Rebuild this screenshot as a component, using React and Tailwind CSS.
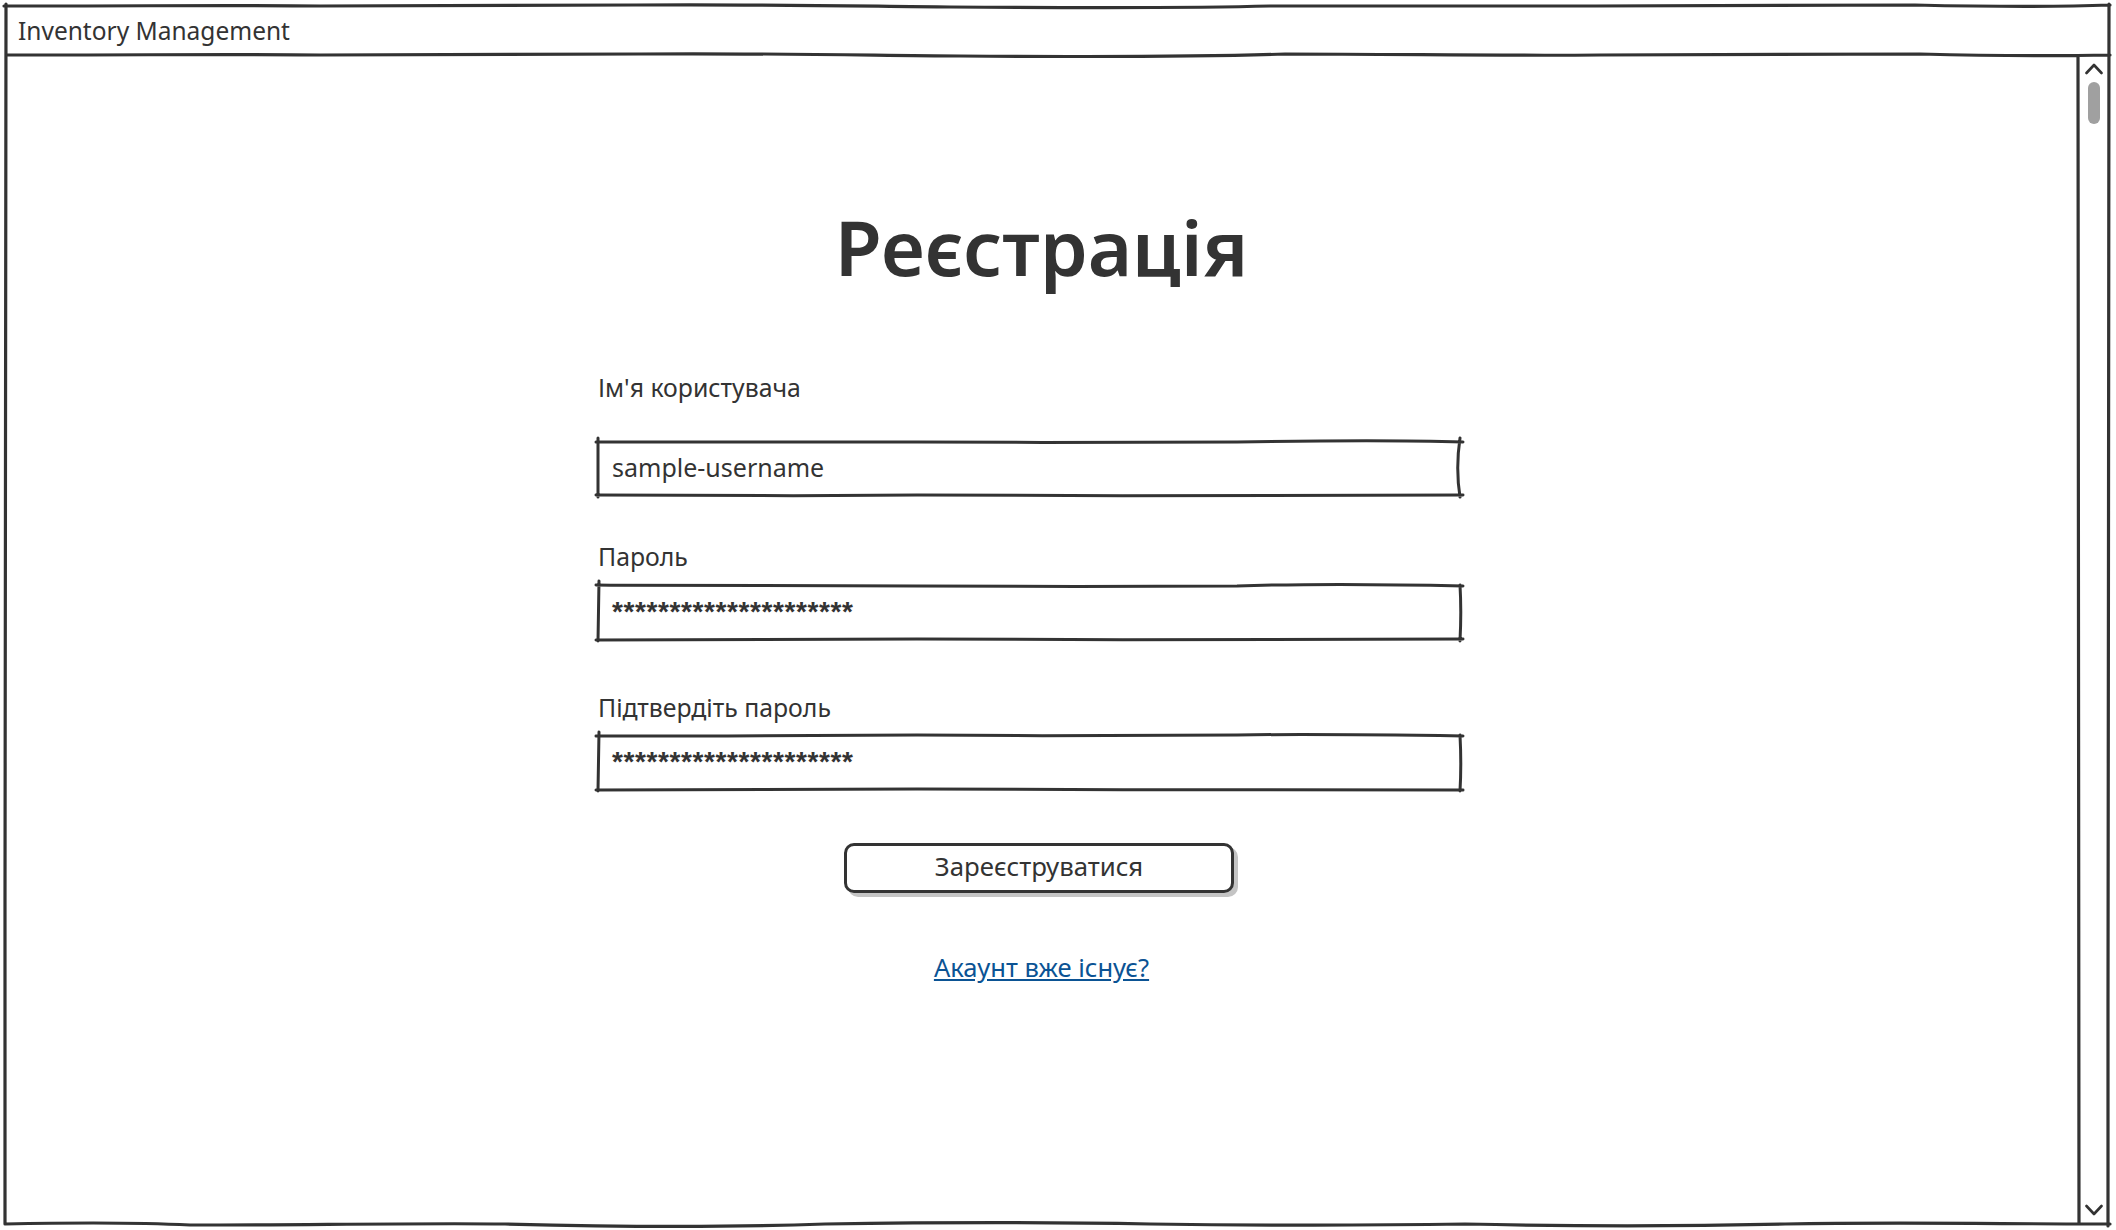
import React from "react";

const ink = "#333333";

function Sketch({ d, w = 3 }) {
  return (
    <svg className="absolute inset-0 h-full w-full overflow-visible pointer-events-none" fill="none">
      <path d={d} stroke={ink} strokeWidth={w} strokeLinecap="round" strokeLinejoin="round" />
    </svg>
  );
}

function Field({ label, value, stars, top, outline }) {
  return (
    <div>
      <div className={`text-[24.8px] leading-[32px] text-[#333] pl-[1px] ${top}`}>{label}</div>
      <div className="relative h-[56px] w-[864px] pl-[15px] flex items-start">
        <Sketch d={outline} />
        {stars ? (
          <span className="text-[28px] leading-[32px] mt-[12px] tracking-[0.6px] font-['Liberation_Sans',sans-serif] font-bold text-[#333]">{value}</span>
        ) : (
          <span className="text-[25px] leading-[36px] mt-[9px] text-[#333]">{value}</span>
        )}
      </div>
    </div>
  );
}

const box1 = "M-1 2 C100 2 240 2 320 2 C430 3 520 2 640 2 C700 1 800 0 866 2 M1 -2 L1 57 M-1 55 C150 56 200 56 320 55 C500 56 700 56 866 55 M863 -2 C860 18 860 38 863 57";
const box2 = "M-1 1 C100 2 200 2 320 2 C430 3 530 2 640 2 C700 0 780 0 866 2 M2 -3 L1 57 M-1 56 C150 56 220 55 320 55 C500 56 700 56 866 55 M863 1 C864 18 864 38 863 57";
const box3 = "M-1 2 C100 2 240 2 320 1 C430 2 520 2 640 1 C700 0 800 1 866 2 M2 -2 L1 57 M-1 56 C150 55 250 56 320 55 C500 56 700 56 866 56 M863 1 C864 20 864 40 863 57";

export default function App() {
  return (
    <div className="relative h-[1230px] w-[2116px] bg-white pt-[6px] pl-[6px] pr-[7px] pb-[5px] flex flex-col font-['Noto_Sans',sans-serif] text-[#333] overflow-hidden">
      <div className="h-[50px] pl-[12px] flex items-center text-[24.5px] text-[#333] shrink-0">Inventory Management</div>
      <div className="flex flex-1 min-h-0">
        <main className="flex-1 flex flex-col pt-[140px]">
          <h1 className="text-[76.5px] leading-[100px] font-semibold text-center text-[#333] pr-[2px]">Реєстрація</h1>
          <div className="ml-[591px] w-[864px] mt-[75px]">
            <Field label="Ім'я користувача" value="sample-username" top="mb-[37px]" outline={box1} />
            <Field label="Пароль" value="*********************" stars top="mt-[44px] mb-[12px]" outline={box2} />
            <Field label="Підтвердіть пароль" value="*********************" stars top="mt-[51px] mb-[11px]" outline={box3} />
          </div>
          <div className="ml-[838px] mt-[53px] pb-[4px] relative h-[50px] w-[390px] flex items-center justify-center rounded-[10px] border-[3px] border-[#333] shadow-[4px_4px_0_0_#c4c4c4] bg-white text-[25.8px] text-[#333]">
            Зареєструватися
          </div>
          <a className="mt-[58px] text-center text-[25.6px] leading-[34px] text-[#0b5394] underline pr-[2px]">
            <span>Акаунт вже існує?</span>
          </a>
        </main>
        <aside className="relative w-[30px] flex flex-col items-center shrink-0">
          <svg width="18" height="12" viewBox="0 0 18 12" fill="none" className="mt-[7px] shrink-0">
            <path d="M1.5 10 L9 2 L16.5 10" stroke={ink} strokeWidth="2.6" strokeLinecap="round" strokeLinejoin="round" />
          </svg>
          <div className="mt-[7px] w-[12px] h-[42px] rounded-full bg-[#a0a0a0]" />
          <svg width="18" height="12" viewBox="0 0 18 12" fill="none" className="mt-auto mb-[9px] shrink-0">
            <path d="M1.5 2 L9 10 L16.5 2" stroke={ink} strokeWidth="2.6" strokeLinecap="round" strokeLinejoin="round" />
          </svg>
        </aside>
      </div>
      <svg className="absolute inset-0 h-full w-full pointer-events-none" fill="none">
        <path d="M4 6 C150 6 250 5 320 6 C450 6 560 6 635 5 C750 4 850 6 950 7 C1100 8 1200 8 1270 6 C1400 5 1500 7 1595 6 C1750 5 1850 5 1915 5 C2000 7 2060 7 2110 5 M6 55 C150 55 250 54 320 55 C450 55 560 55 640 54 C750 53 850 55 960 56 C1100 57 1200 57 1285 54 C1400 54 1500 56 1600 55 C1750 54 1850 54 1920 54 C2000 56 2060 56 2110 55 M6 4 C5 300 7 600 5 900 C4 1050 5 1150 5 1224 M2109 4 C2107 300 2110 700 2108 1000 L2108 1226 M2078 56 C2080 400 2077 800 2079 1224 M5 1224 C100 1222 150 1223 190 1225 C300 1225 420 1223 505 1224 C620 1227 740 1227 825 1224 C950 1222 1050 1222 1150 1224 C1300 1226 1400 1225 1465 1224 C1600 1227 1700 1226 1785 1224 C1900 1222 2000 1224 2110 1224" stroke={ink} strokeWidth="3.2" strokeLinecap="round" />
      </svg>
    </div>
  );
}
